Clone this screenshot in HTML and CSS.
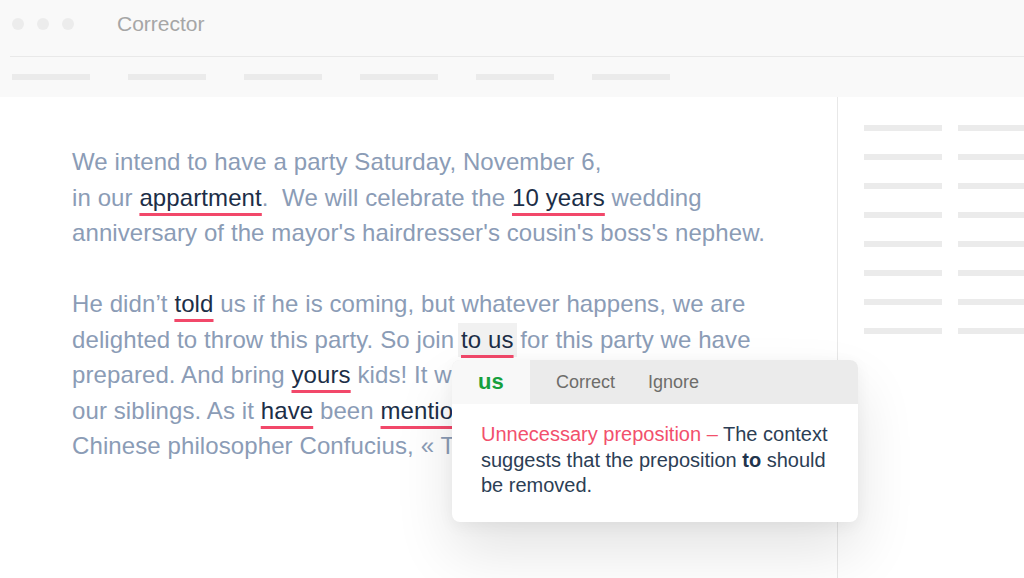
FILE: index.html
```html
<!DOCTYPE html>
<html lang="en">
<head>
<meta charset="utf-8">
<title>Corrector</title>
<link rel="stylesheet" href="styles.css">
</head>
<body>
<div class="window">
  <header class="titlebar">
    <div class="dots"><span class="dot"></span><span class="dot"></span><span class="dot"></span></div>
    <div class="title">Corrector</div>
  </header>
  <div class="divider"></div>
  <nav class="toolbar">
    <span class="tbar"></span><span class="tbar"></span><span class="tbar"></span>
    <span class="tbar"></span><span class="tbar"></span><span class="tbar"></span>
  </nav>
  <div class="main">
    <article class="doc">
      <p>We intend to have a party Saturday, November 6,<br>in our <span class="err">appartment</span>.&nbsp; We will celebrate the <span class="err">10 years</span> wedding<br>anniversary of the mayor's hairdresser's cousin's boss's nephew.</p>
      <p>He didn’t <span class="err">told</span> us if he is coming, but whatever happens, we are<br>delighted to throw this party. So join <span class="err active">to us</span> for this party we have<br>prepared. And bring <span class="err">yours</span> kids! It will be<br>our siblings. As it <span class="err">have</span> been <span class="err">mentionned</span><br>Chinese philosopher Confucius, « The more</p>
    </article>
    <aside class="sidebar">
      <div class="srow"><span class="sbar"></span><span class="sbar"></span></div>
      <div class="srow"><span class="sbar"></span><span class="sbar"></span></div>
      <div class="srow"><span class="sbar"></span><span class="sbar"></span></div>
      <div class="srow"><span class="sbar"></span><span class="sbar"></span></div>
      <div class="srow"><span class="sbar"></span><span class="sbar"></span></div>
      <div class="srow"><span class="sbar"></span><span class="sbar"></span></div>
      <div class="srow"><span class="sbar"></span><span class="sbar"></span></div>
      <div class="srow"><span class="sbar"></span><span class="sbar"></span></div>
    </aside>
  </div>
  <div class="popup">
    <div class="popup-head">
      <span class="tab suggestion">us</span>
      <span class="tab action">Correct</span>
      <span class="tab action">Ignore</span>
    </div>
    <div class="popup-body">
      <span class="kind">Unnecessary preposition –</span> The context suggests that the preposition <b>to</b> should be removed.
    </div>
  </div>
</div>
</body>
</html>
```

FILE: styles.css
```css
* { box-sizing: border-box; }
html, body { margin: 0; padding: 0; background: #ffffff; }
body { font-family: "Liberation Sans", Arial, sans-serif; }

.window {
  position: relative;
  width: 1024px;
  height: 578px;
  overflow: hidden;
  background: #ffffff;
}

.titlebar {
  height: 56px;
  background: #f9f9f9;
  display: flex;
  align-items: flex-start;
  padding: 18px 0 0 12px;
}
.dots { display: flex; gap: 13px; }
.dot {
  width: 12px; height: 12px; border-radius: 50%;
  background: #ececec;
}
.title {
  margin-left: 43px;
  margin-top: -6px;
  font-size: 21px;
  line-height: 24px;
  color: #a6a6a6;
}
.divider {
  height: 1px;
  background: #f9f9f9;
  border-left: 10px solid #f9f9f9;
  box-shadow: inset 0 1px 0 #e9e9e9;
}
.toolbar {
  height: 40px;
  background: #f9f9f9;
  display: flex;
  gap: 38px;
  padding: 17px 0 0 12px;
}
.tbar { width: 78px; height: 6px; background: #ebebeb; }

.main {
  display: flex;
  height: 481px;
}
.doc {
  flex: 1;
  padding: 47px 0 0 72px;
  font-size: 24px;
  line-height: 35.5px;
  letter-spacing: 0.1px;
  color: #8b9cb6;
  white-space: nowrap;
}
.doc p { margin: 0 0 35.5px 0; }
.err {
  color: #1c2e47;
  text-decoration: underline;
  text-decoration-color: #f2486a;
  text-decoration-thickness: 3px;
  text-underline-offset: 7px;
}
.active {
  background: #f1f1f1;
  padding: 3px 3px 4px;
  margin: 0 -3px;
}

.sidebar {
  width: 187px;
  border-left: 1px solid #e8e8e8;
  padding: 28px 0 0 26px;
  display: flex;
  flex-direction: column;
  gap: 23px;
}
.srow { display: flex; gap: 16px; }
.sbar { width: 78px; height: 6px; background: #ebebeb; flex: none; }

.popup {
  position: absolute;
  left: 452px;
  top: 360px;
  width: 406px;
  border-radius: 8px;
  overflow: hidden;
  background: #ffffff;
  box-shadow: 0 30px 60px rgba(0, 0, 0, 0.11), 0 4px 16px rgba(0, 0, 0, 0.05);
}
.popup-head {
  height: 44px;
  background: #ebebeb;
  display: flex;
  align-items: stretch;
}
.tab {
  display: flex;
  align-items: center;
  font-size: 18px;
}
.suggestion {
  width: 78px;
  padding-left: 26px;
  background: #f8f8f8;
  color: #17a03d;
  font-weight: bold;
  font-size: 22px;
}
.action {
  color: #6e6d6a;
  margin-left: 26px;
}
.action + .action { margin-left: 33px; }
.popup-body {
  padding: 18px 22px 23px 29px;
  font-size: 20px;
  line-height: 25.5px;
  color: #2c3e55;
}
.kind { color: #f2506c; }
.popup-body b { font-weight: bold; color: #22344c; }
```
